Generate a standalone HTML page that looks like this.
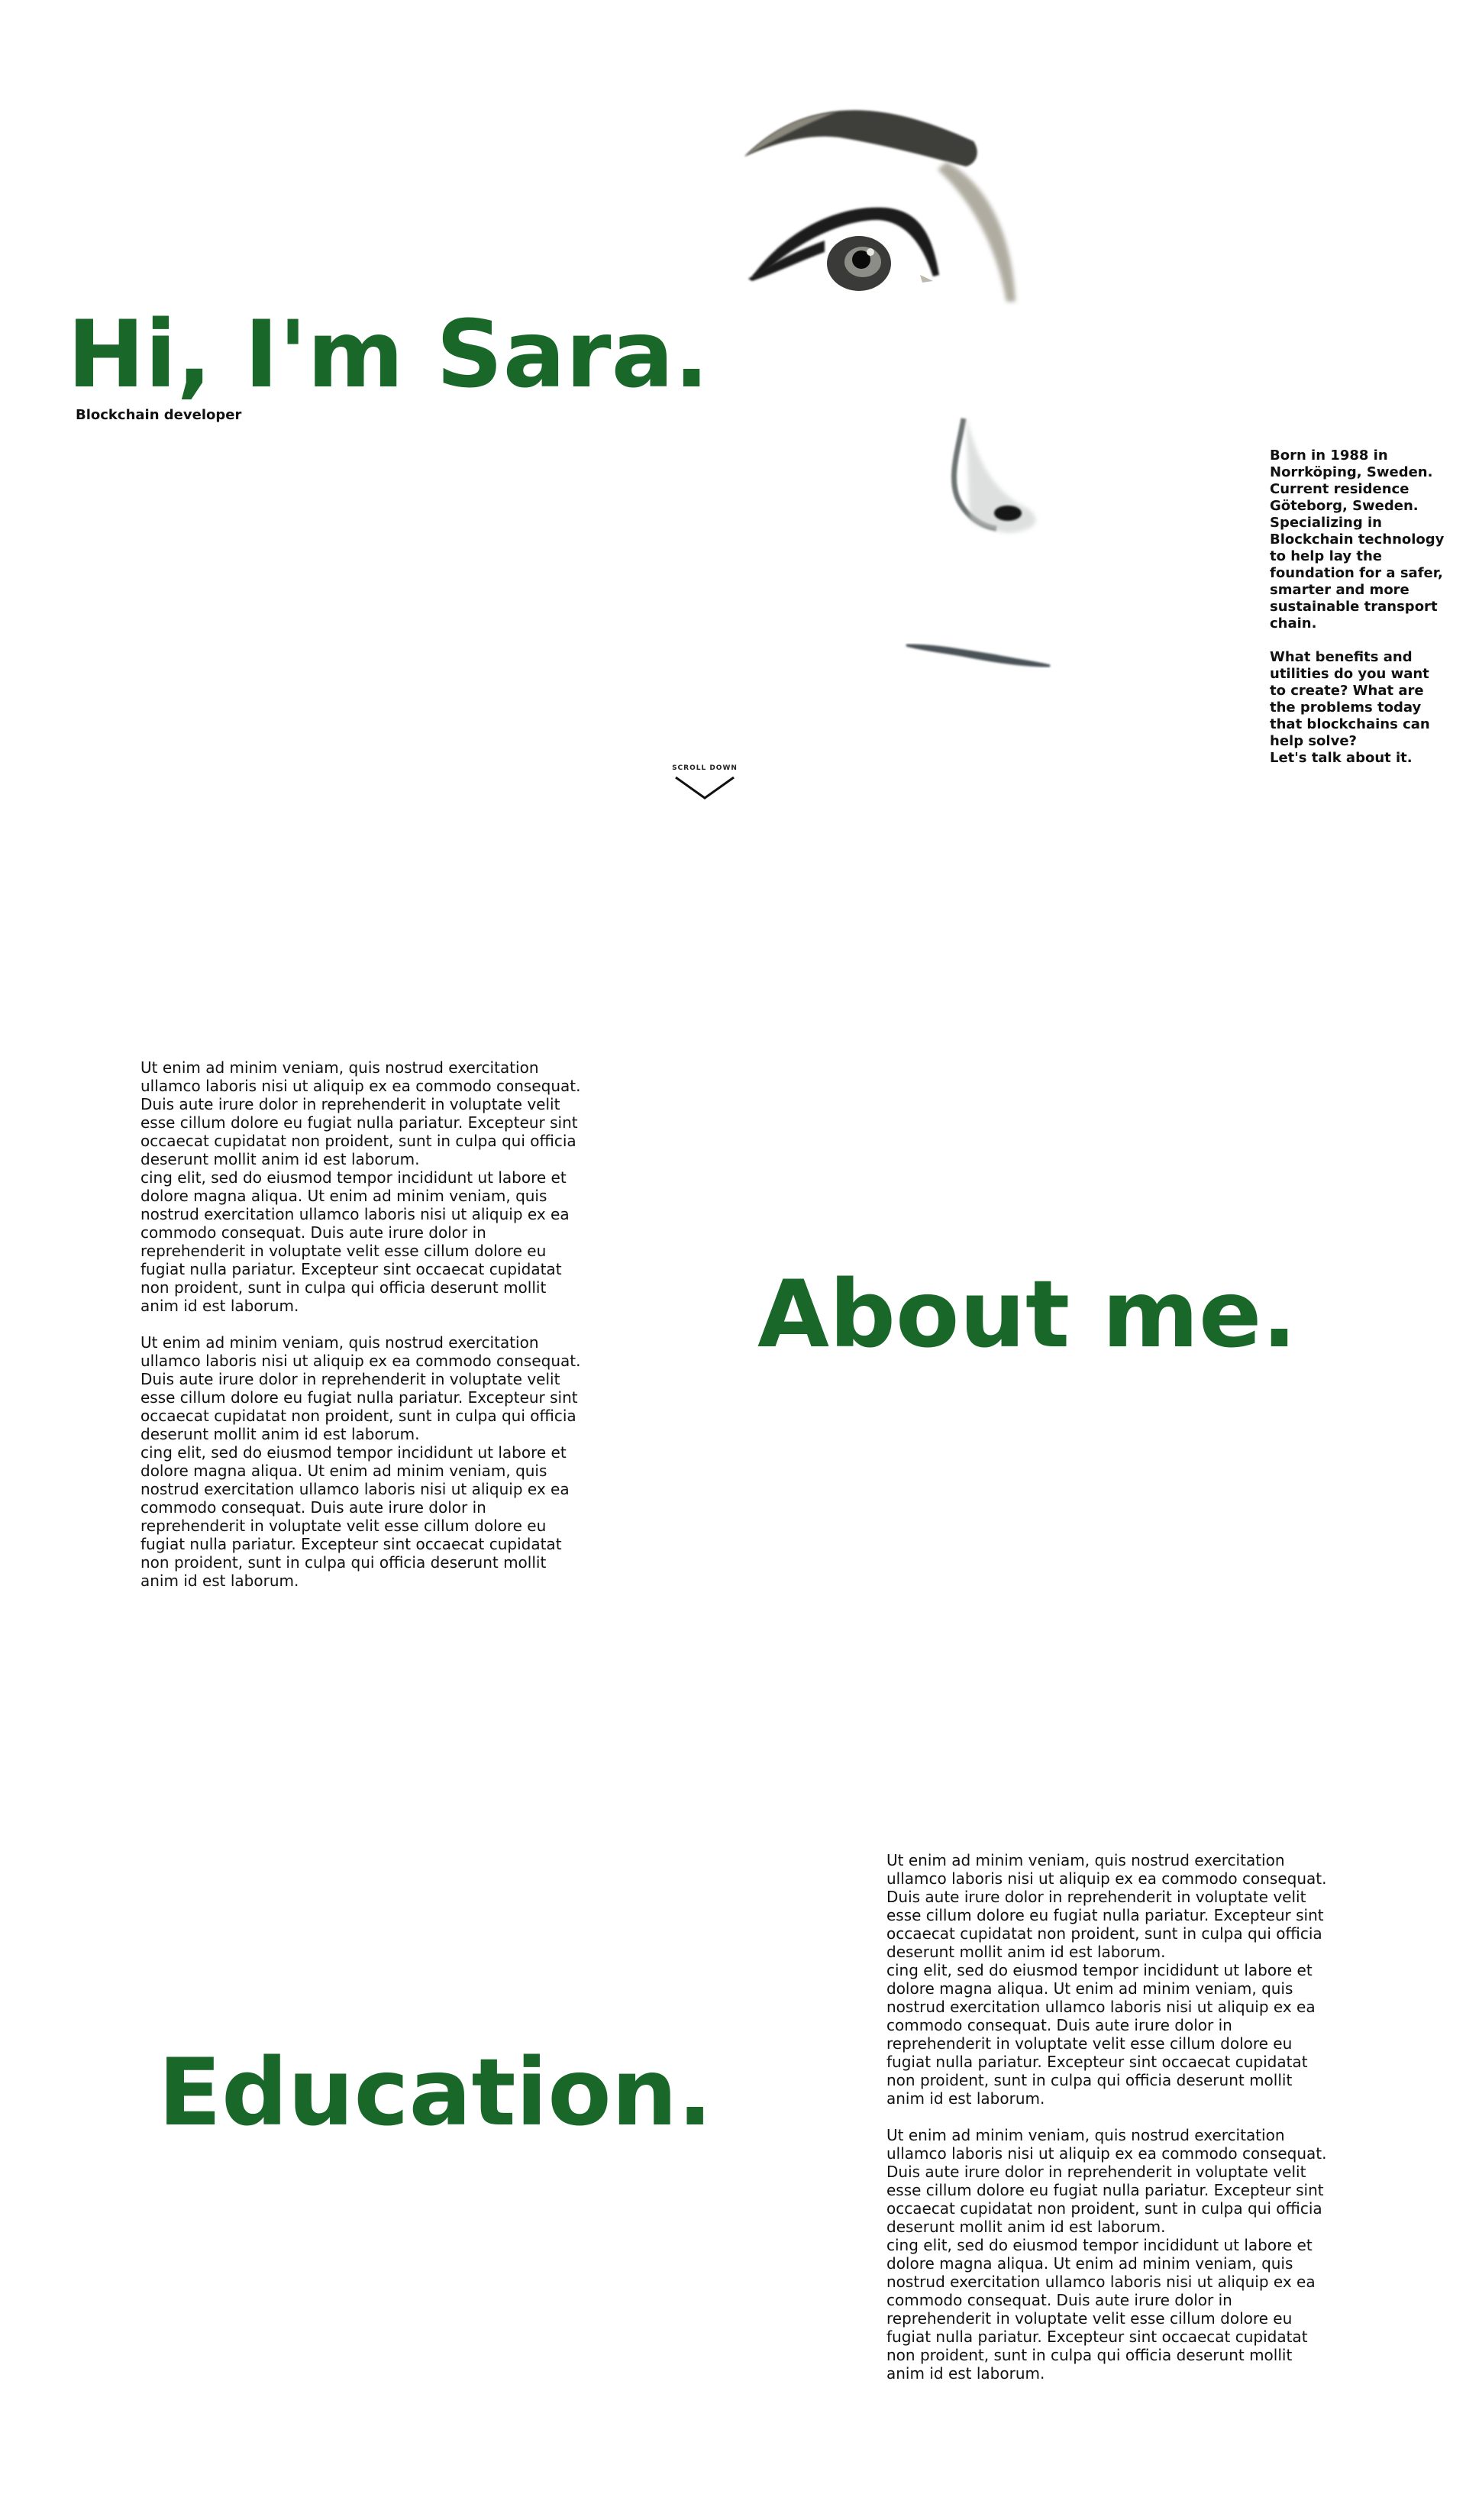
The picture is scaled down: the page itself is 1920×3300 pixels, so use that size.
<!DOCTYPE html>
<html><head><meta charset="utf-8">
<style>
html,body{margin:0;padding:0;background:#fff;}
body{width:1920px;height:3300px;position:relative;overflow:hidden;font-family:"DejaVu Sans","Liberation Sans",sans-serif;color:#111;}
.h{position:absolute;font-weight:bold;font-size:121.5px;color:#19682a;line-height:1;white-space:nowrap;margin:0;}
.p{position:absolute;font-size:20px;line-height:24px;white-space:nowrap;color:#111;}
.side{position:absolute;left:1663px;top:586px;font-size:18px;line-height:22px;font-weight:bold;white-space:nowrap;}
</style></head><body>

<svg style="position:absolute;left:0;top:0" width="1920" height="1100" viewBox="0 0 1920 1100">
  <defs>
    <filter id="b1"><feGaussianBlur stdDeviation="3"/></filter>
    <filter id="b2"><feGaussianBlur stdDeviation="1.2"/></filter>
  </defs>
  <path d="M975,205 C1010,170 1050,150 1100,145 C1160,140 1220,160 1275,185 C1285,200 1278,215 1265,218 C1215,205 1160,190 1100,180 C1060,175 1020,185 975,205Z" fill="#2a2a26" filter="url(#b2)" opacity="0.9"/>
  <path d="M975,205 C1010,170 1050,150 1095,147 C1060,160 1020,180 975,205Z" fill="#8a877c" filter="url(#b2)"/>
  <path d="M1240,212 C1290,240 1325,300 1330,395 L1318,395 C1305,320 1270,260 1228,222Z" fill="#a8a498" filter="url(#b1)" opacity="0.9"/>
  <path d="M985,362 C1030,300 1100,268 1160,272 C1200,276 1220,300 1230,360 L1222,362 C1205,310 1180,290 1150,288 C1100,288 1040,320 995,362Z" fill="#1e1e1c" filter="url(#b2)"/>
  <path d="M980,365 C1010,345 1040,330 1080,315 L1080,330 C1040,345 1010,360 985,368Z" fill="#1e1e1c" filter="url(#b2)"/>
  <ellipse cx="1125" cy="345" rx="42" ry="36" fill="#3a3a38"/>
  <ellipse cx="1130" cy="343" rx="24" ry="20" fill="#8d8d88"/>
  <circle cx="1128" cy="340" r="12" fill="#0a0a0a"/>
  <circle cx="1140" cy="330" r="5" fill="#e8e8e2"/>
  <path d="M1205,360 L1222,368 L1208,370Z" fill="#bdb9ae"/>
  <path d="M1262,548 C1255,590 1240,630 1258,660 C1270,680 1290,690 1305,692" stroke="#6e7474" stroke-width="7" fill="none" filter="url(#b2)"/>
  <path d="M1265,545 C1275,580 1290,640 1345,665 C1365,680 1360,695 1320,698 C1300,695 1280,690 1270,680" fill="#c8ccca" opacity="0.6" filter="url(#b1)"/>
  <ellipse cx="1320" cy="672" rx="18" ry="10" fill="#151515" filter="url(#b2)"/>
  <path d="M1187,845 C1230,845 1260,852 1300,858 C1330,864 1360,868 1375,872 C1340,872 1300,866 1260,858 C1230,853 1205,850 1187,845Z" stroke="#4a5358" stroke-width="3" fill="#4a5358" filter="url(#b2)"/>
  <text x="923" y="1008" font-family="DejaVu Sans, sans-serif" font-size="9" font-weight="bold" text-anchor="middle" letter-spacing="1" fill="#222">SCROLL DOWN</text>
  <path d="M885,1018 L923,1045 L961,1018" stroke="#111" stroke-width="3" fill="none"/>
</svg>

<h1 class="h" style="left:88px;top:404px;">Hi, I'm Sara.</h1>
<div style="position:absolute;left:99px;top:533px;font-size:18px;font-weight:bold;white-space:nowrap;">Blockchain developer</div>

<div class="side">Born in 1988 in<br>Norrköping, Sweden.<br>Current residence<br>Göteborg, Sweden.<br>Specializing in<br>Blockchain technology<br>to help lay the<br>foundation for a safer,<br>smarter and more<br>sustainable transport<br>chain.<br><br>What benefits and<br>utilities do you want<br>to create? What are<br>the problems today<br>that blockchains can<br>help solve?<br>Let's talk about it.</div>

<div class="p" style="left:184px;top:1386px;">Ut enim ad minim veniam, quis nostrud exercitation<br>ullamco laboris nisi ut aliquip ex ea commodo consequat.<br>Duis aute irure dolor in reprehenderit in voluptate velit<br>esse cillum dolore eu fugiat nulla pariatur. Excepteur sint<br>occaecat cupidatat non proident, sunt in culpa qui officia<br>deserunt mollit anim id est laborum.<br>cing elit, sed do eiusmod tempor incididunt ut labore et<br>dolore magna aliqua. Ut enim ad minim veniam, quis<br>nostrud exercitation ullamco laboris nisi ut aliquip ex ea<br>commodo consequat. Duis aute irure dolor in<br>reprehenderit in voluptate velit esse cillum dolore eu<br>fugiat nulla pariatur. Excepteur sint occaecat cupidatat<br>non proident, sunt in culpa qui officia deserunt mollit<br>anim id est laborum.<br><br>Ut enim ad minim veniam, quis nostrud exercitation<br>ullamco laboris nisi ut aliquip ex ea commodo consequat.<br>Duis aute irure dolor in reprehenderit in voluptate velit<br>esse cillum dolore eu fugiat nulla pariatur. Excepteur sint<br>occaecat cupidatat non proident, sunt in culpa qui officia<br>deserunt mollit anim id est laborum.<br>cing elit, sed do eiusmod tempor incididunt ut labore et<br>dolore magna aliqua. Ut enim ad minim veniam, quis<br>nostrud exercitation ullamco laboris nisi ut aliquip ex ea<br>commodo consequat. Duis aute irure dolor in<br>reprehenderit in voluptate velit esse cillum dolore eu<br>fugiat nulla pariatur. Excepteur sint occaecat cupidatat<br>non proident, sunt in culpa qui officia deserunt mollit<br>anim id est laborum.</div>

<h2 class="h" style="left:992px;top:1661px;">About me.</h2>

<h2 class="h" style="left:207px;top:2680px;">Education.</h2>

<div class="p" style="left:1161px;top:2424px;">Ut enim ad minim veniam, quis nostrud exercitation<br>ullamco laboris nisi ut aliquip ex ea commodo consequat.<br>Duis aute irure dolor in reprehenderit in voluptate velit<br>esse cillum dolore eu fugiat nulla pariatur. Excepteur sint<br>occaecat cupidatat non proident, sunt in culpa qui officia<br>deserunt mollit anim id est laborum.<br>cing elit, sed do eiusmod tempor incididunt ut labore et<br>dolore magna aliqua. Ut enim ad minim veniam, quis<br>nostrud exercitation ullamco laboris nisi ut aliquip ex ea<br>commodo consequat. Duis aute irure dolor in<br>reprehenderit in voluptate velit esse cillum dolore eu<br>fugiat nulla pariatur. Excepteur sint occaecat cupidatat<br>non proident, sunt in culpa qui officia deserunt mollit<br>anim id est laborum.<br><br>Ut enim ad minim veniam, quis nostrud exercitation<br>ullamco laboris nisi ut aliquip ex ea commodo consequat.<br>Duis aute irure dolor in reprehenderit in voluptate velit<br>esse cillum dolore eu fugiat nulla pariatur. Excepteur sint<br>occaecat cupidatat non proident, sunt in culpa qui officia<br>deserunt mollit anim id est laborum.<br>cing elit, sed do eiusmod tempor incididunt ut labore et<br>dolore magna aliqua. Ut enim ad minim veniam, quis<br>nostrud exercitation ullamco laboris nisi ut aliquip ex ea<br>commodo consequat. Duis aute irure dolor in<br>reprehenderit in voluptate velit esse cillum dolore eu<br>fugiat nulla pariatur. Excepteur sint occaecat cupidatat<br>non proident, sunt in culpa qui officia deserunt mollit<br>anim id est laborum.</div>

</body></html>
